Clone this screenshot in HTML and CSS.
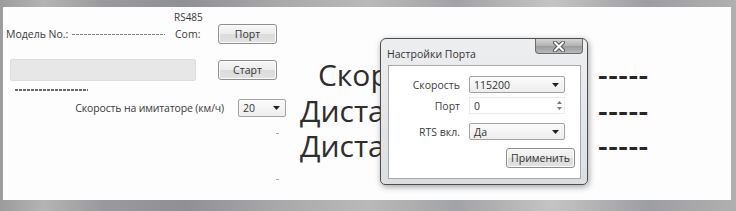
FILE: index.html
```html
<!DOCTYPE html>
<html lang="ru">
<head>
<meta charset="utf-8">
<title>Имитатор</title>
<link rel="stylesheet" href="styles.css">
</head>
<body>
<div class="frame">
  <div class="client">
    <div class="left">
      <div class="rs">RS485</div>
      <div class="model">
        <span class="lbl-model">Модель No.:</span>
        <span class="dash"></span>
        <span class="com">Com:</span>
        <div class="btn">Порт</div>
      </div>
      <div class="prog">
        <div class="bar"></div>
        <div class="btn">Старт</div>
      </div>
      <div class="sdash"></div>
      <div class="speed">
        <span class="speed-lbl">Скорость на имитаторе (км/ч)</span>
        <div class="combo combo-speed"><span>20</span><svg width="7" height="4" viewBox="0 0 7 4"><path d="M0 0h7L3.5 4z" fill="#222"/></svg></div>
      </div>
      <div class="tick tick1"></div>
      <div class="tick tick2"></div>
    </div>
    <div class="display">
      <div class="dl">Скорость</div><div class="dv">-----</div>
      <div class="dl">Дистанция</div><div class="dv">-----</div>
      <div class="dl">Дистанция</div><div class="dv">-----</div>
    </div>
  </div>
  <div class="dialog">
    <div class="dlg-title">
      <span class="dlg-caption">Настройки Порта</span>
      <div class="close"><svg width="14" height="11" viewBox="0 0 14 11"><path d="M3 1.5L11 9.5M11 1.5L3 9.5" stroke="#5a5a5a" stroke-width="4" stroke-linecap="round"/><path d="M3 1.5L11 9.5M11 1.5L3 9.5" stroke="#fff" stroke-width="2" stroke-linecap="round"/></svg></div>
    </div>
    <div class="dlg-client">
      <div class="frow">
        <span class="flabel">Скорость</span>
        <div class="combo field"><span>115200</span><svg width="7" height="4" viewBox="0 0 7 4"><path d="M0 0h7L3.5 4z" fill="#222"/></svg></div>
      </div>
      <div class="frow r2">
        <span class="flabel">Порт</span>
        <div class="num field"><span>0</span><svg width="5" height="11" viewBox="0 0 5 11"><path d="M2.5 1L5 4H0zM2.5 10L0 7h5z" fill="#777"/></svg></div>
      </div>
      <div class="frow r3">
        <span class="flabel">RTS вкл.</span>
        <div class="combo field"><span>Да</span><svg width="7" height="4" viewBox="0 0 7 4"><path d="M0 0h7L3.5 4z" fill="#222"/></svg></div>
      </div>
      <div class="actions"><div class="btn btn-apply">Применить</div></div>
    </div>
  </div>
</div>
</body>
</html>
```

FILE: styles.css
```css
* { box-sizing: border-box; margin: 0; padding: 0; }
html, body { width: 736px; height: 211px; overflow: hidden; background: #fff; }
body { font-family: "Open Sans", "Noto Sans", sans-serif; font-size: 10.5px; color: #3a3a3a; }

.frame {
  position: relative;
  width: 736px; height: 211px;
  padding: 7px 5px 11px 3px;
  background: linear-gradient(90deg, #9c9c9c 0, #b4b4b4 6%, #9a9a9e 14%, #8f9095 25%, #a9a9ab 38%, #b9b9b9 50%, #a2a3a6 62%, #c4c4c4 75%, #9d9ea2 88%, #b0b0b0 100%);
}
.client {
  display: flex;
  height: 193px;
  background: #fdfdfd;
}

.left { width: 297px; flex: none; padding: 4px 0 0 3px; }
.rs { height: 12px; line-height: 12px; padding-left: 168px; font-size: 10px; }
.model { display: flex; align-items: center; height: 20px; margin-top: 1px; }
.lbl-model { width: 66px; flex: none; }
.dash { width: 93px; height: 1px; margin: 1px 10px 0 0; background: repeating-linear-gradient(90deg, #808080 0 3px, transparent 3px 4px); }
.com { width: 43px; flex: none; }

.btn {
  width: 59px; height: 20px; flex: none;
  border: 1px solid #8e8e8e; border-radius: 3px;
  background: linear-gradient(#f7f7f7, #ececec 48%, #dcdcdc 52%, #e2e2e2);
  box-shadow: inset 0 0 0 1px #fbfbfb;
  display: flex; align-items: center; justify-content: center;
  color: #333;
}

.prog { display: flex; align-items: center; height: 22px; margin-top: 15px; }
.bar { width: 186px; height: 22px; margin-left: 4px; background: #e7e7e7; border: 1px solid #dcdcdc; border-radius: 2px; }
.prog .btn { margin-left: 22px; }

.sdash { width: 73px; height: 2px; margin: 8px 0 0 9px; background: repeating-linear-gradient(90deg, #6a6a6a 0 3px, transparent 3px 4px); }

.speed { display: flex; align-items: center; justify-content: flex-end; width: 280px; height: 18px; margin-top: 8px; }
.speed-lbl { letter-spacing: -0.15px; }
.combo {
  height: 18px;
  border: 1px solid #a2a2a2; border-radius: 2px;
  background: linear-gradient(#fbfbfb, #ededed);
  display: flex; align-items: center; justify-content: space-between;
  padding: 0 5px 0 4px;
  color: #333;
}
.combo-speed { width: 48px; margin-left: 14px; }

.tick { width: 3px; height: 1px; background: #a8a8a8; margin-left: 270px; }
.tick1 { margin-top: 16px; }
.tick2 { margin-top: 45px; }

.display {
  flex: 1;
  display: grid;
  grid-template-columns: 153px 1fr;
  column-gap: 145px;
  align-content: start;
  padding-top: 50px;
  font-size: 30px;
  line-height: 35.5px;
  color: #2e2e2e;
}
.dl { text-align: right; white-space: nowrap; }
.dv { font-weight: 600; color: #262626; letter-spacing: 0.5px; }

.dialog {
  position: absolute;
  left: 380px; top: 38px;
  width: 208px; height: 147px;
  border: 1px solid #4e4e4e;
  border-radius: 6px 6px 5px 5px;
  background: linear-gradient(#eceef0, #dcdfe2);
  box-shadow: 1px 2px 6px rgba(0, 0, 0, 0.35);
  display: flex; flex-direction: column;
}
.dlg-title { height: 26px; flex: none; display: flex; align-items: flex-start; padding-left: 6px; }
.dlg-caption { margin-top: 9px; line-height: 13px; color: #333; }
.close {
  margin-left: auto; margin-right: 4px;
  width: 48px; height: 15px;
  border: 1px solid #6c6c6c; border-top: none;
  border-radius: 0 0 4px 4px;
  background: linear-gradient(#d6d6d6, #b0b0b0 50%, #9c9c9c 52%, #b8b8b8);
  display: flex; align-items: center; justify-content: center;
}
.dlg-client {
  flex: 1;
  margin: 0 6px 5px 7px;
  background: #fff;
  border: 1px solid #a8a8a8;
  padding-top: 10px;
}
.frow { display: flex; align-items: center; height: 17px; }
.r2 { margin-top: 4px; }
.r3 { margin-top: 9px; }
.flabel { width: 71px; flex: none; text-align: right; color: #3c3c3c; }
.field { width: 96px; height: 17px; margin-left: 9px; }
.num {
  border: 1px solid #ececec;
  display: flex; align-items: center; justify-content: space-between;
  padding: 0 2px 0 4px;
  color: #333;
}
.actions { display: flex; justify-content: flex-end; margin-top: 8px; padding-right: 5px; }
.btn-apply { width: 69px; }
```
